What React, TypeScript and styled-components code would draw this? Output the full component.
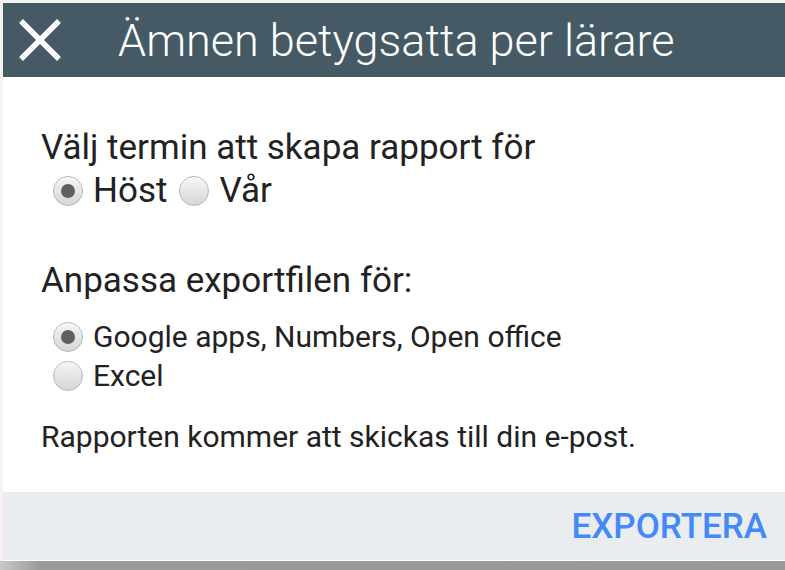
import styled, { createGlobalStyle } from "styled-components";
import { useState } from "react";

const GlobalStyle = createGlobalStyle`
  html, body {
    margin: 0;
    padding: 0;
    width: 785px;
    height: 570px;
    overflow: hidden;
    background: #f7f1f1;
    font-family: Roboto, "Liberation Sans", sans-serif;
  }
`;

type RadioProps = {
  name: string;
  label: string;
  checked: boolean;
  onChange: () => void;
};

const Radio = ({ name, label, checked, onChange }: RadioProps) => (
  <RadioLabel>
    <RadioInput type="radio" name={name} checked={checked} onChange={onChange} />
    {label}
  </RadioLabel>
);

export default function App() {
  const [term, setTerm] = useState("host");
  const [format, setFormat] = useState("google");

  return (
    <>
      <GlobalStyle />
      <Page>
        <Dialog>
          <Header>
            <CloseButton aria-label="Stäng">
              <svg width="44" height="44" viewBox="0 0 44 44">
                <path d="M3 3 L41 41 M41 3 L3 41" stroke="#fff" strokeWidth="5.5" />
              </svg>
            </CloseButton>
            <Title>Ämnen betygsatta per lärare</Title>
          </Header>
          <Body>
            <Question>Välj termin att skapa rapport för</Question>
            <InlineOptions>
              <Radio name="term" label="Höst" checked={term === "host"} onChange={() => setTerm("host")} />
              <Radio name="term" label="Vår" checked={term === "var"} onChange={() => setTerm("var")} />
            </InlineOptions>
            <Question $gap={47}>Anpassa exportfilen för:</Question>
            <StackedOptions>
              <Radio
                name="format"
                label="Google apps, Numbers, Open office"
                checked={format === "google"}
                onChange={() => setFormat("google")}
              />
              <Radio name="format" label="Excel" checked={format === "excel"} onChange={() => setFormat("excel")} />
            </StackedOptions>
            <Note>Rapporten kommer att skickas till din e-post.</Note>
          </Body>
          <Footer>
            <ExportButton>EXPORTERA</ExportButton>
          </Footer>
        </Dialog>
        <Shade />
      </Page>
    </>
  );
}

const Page = styled.div`
  width: 785px;
  height: 570px;
  display: flex;
  flex-direction: column;
  overflow: hidden;
`;

const Dialog = styled.div`
  margin: 3px 0 0 3px;
  width: 782px;
  background: #fff;
  display: flex;
  flex-direction: column;
  border-bottom: 1px solid #fff;
`;

const Header = styled.div`
  height: 74px;
  background: #455a64;
  display: flex;
  align-items: center;
  gap: 56px;
  padding-left: 15px;
`;

const CloseButton = styled.button`
  border: none;
  background: none;
  padding: 0;
  width: 44px;
  height: 44px;
  display: flex;
  cursor: pointer;
`;

const Title = styled.h1`
  margin: 0;
  font-weight: 300;
  font-size: 45px;
  color: #fff;
  white-space: nowrap;
`;

const Body = styled.div`
  padding: 51px 38px 37px;
  display: flex;
  flex-direction: column;
  color: #222;
`;

const Question = styled.div<{ $gap?: number }>`
  font-size: 35px;
  line-height: 40px;
  margin-top: ${(p) => p.$gap ?? 0}px;
`;

const InlineOptions = styled.div`
  display: flex;
  gap: 12px;
  padding-left: 12px;
`;

const StackedOptions = styled.div`
  display: flex;
  flex-direction: column;
  padding-left: 12px;
  margin-top: 16px;
`;

const RadioLabel = styled.label`
  display: flex;
  align-items: center;
  gap: 10px;
  font-size: 30px;
  line-height: 39px;
  ${InlineOptions} & {
    font-size: 35px;
    line-height: 46px;
  }
`;

const RadioInput = styled.input`
  appearance: none;
  margin: 0;
  width: 30px;
  height: 30px;
  border-radius: 50%;
  border: 1px solid #b5b5b5;
  background: linear-gradient(#f6f6f6, #d6d6d6);
  box-shadow: inset 0 1px 0 #fff;
  display: grid;
  place-items: center;
  &::after {
    content: "";
    width: 14px;
    height: 14px;
    border-radius: 50%;
    background: transparent;
  }
  &:checked::after {
    background: #606060;
  }
`;

const Note = styled.p`
  margin: 24px 0 0;
  font-size: 30px;
  line-height: 36px;
`;

const Footer = styled.div`
  height: 68px;
  background: #e9edf0;
  display: flex;
  align-items: center;
  justify-content: flex-end;
  padding-right: 18px;
`;

const ExportButton = styled.button`
  border: none;
  background: none;
  padding: 0;
  font-family: Roboto, "Liberation Sans", sans-serif;
  font-weight: 500;
  font-size: 35px;
  color: #4489f7;
  cursor: pointer;
`;

const Shade = styled.div`
  flex: 1;
  background: linear-gradient(90deg, #c9c9c9 0, #9a9a9a 40px, #999 100%);
`;
